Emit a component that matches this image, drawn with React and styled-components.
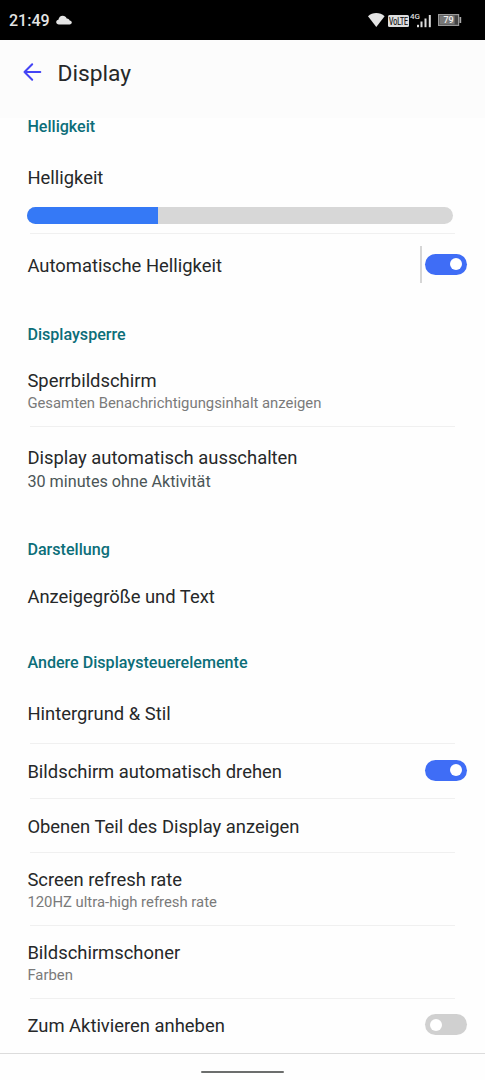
import React, { useState } from 'react';
import styled, { createGlobalStyle } from 'styled-components';

const GlobalStyle = createGlobalStyle`
  body {
    margin: 0;
    background: #fefefe;
    font-family: Roboto, "Liberation Sans", sans-serif;
  }
`;

const Screen = styled.div`
  display: flex;
  flex-direction: column;
  width: 485px;
  height: 1080px;
  overflow: hidden;
`;

const StatusBar = styled.div`
  display: flex;
  align-items: center;
  justify-content: space-between;
  box-sizing: border-box;
  height: 40px;
  padding: 0 23px 0 9px;
  background: #000;
  color: #e4e4e4;
`;

const StatusGroup = styled.div`
  display: flex;
  align-items: center;
`;

const Clock = styled.span`
  margin-right: 6.5px;
  padding-top: 2px;
  font-size: 16px;
  font-weight: 500;
  line-height: 20px;
`;

const Header = styled.header`
  display: flex;
  align-items: center;
  box-sizing: border-box;
  height: 78px;
  padding: 0 22px 12px;
  background: #fcfcfc;
`;

const BackButton = styled.button`
  display: flex;
  margin: 0 14.5px 1px 0;
  padding: 0;
  border: none;
  background: none;
`;

const PageTitle = styled.h1`
  margin: 0;
  padding-top: 2px;
  color: #262829;
  font-size: 22.8px;
  font-weight: 400;
  line-height: 28px;
`;

const SectionTitle = styled.h2`
  margin: ${(props) => props.$top || 0}px 0 0 27.4px;
  padding-top: 1px;
  color: #0c6e79;
  font-size: 16.1px;
  font-weight: 500;
  line-height: 16px;
`;

const Row = styled.div`
  display: flex;
  align-items: center;
  justify-content: space-between;
  box-sizing: border-box;
  height: ${(props) => props.$height}px;
  padding: ${(props) => props.$top || 0}px 18.3px 0 27.4px;
`;

const Label = styled.div`
  color: #262829;
  font-size: 18.4px;
  line-height: 24px;
`;

const Summary = styled.div`
  margin-top: ${(props) => (props.$strong ? 2 : 0)}px;
  color: ${(props) => (props.$strong ? '#4b5557' : '#7a7a7a')};
  font-size: ${(props) => (props.$strong ? 16.2 : 14.85)}px;
  line-height: 20px;
`;

const Divider = styled.div`
  height: 1px;
  margin: 0 30px;
  background: #f0f0f0;
`;

const SliderTrack = styled.div`
  height: 17px;
  margin: 5px 32px 9px 27px;
  border-radius: 9px;
  background: #d7d7d7;
  overflow: hidden;
`;

const SliderFill = styled.div`
  height: 100%;
  background: #3579f6;
`;

const SwitchGroup = styled.div`
  display: flex;
  align-items: center;
`;

const SwitchLine = styled.div`
  width: 2px;
  height: 37px;
  margin: 0 3px 2px 0;
  background: #d6d6d6;
`;

const Track = styled.button`
  display: flex;
  align-items: center;
  justify-content: ${(props) => (props.$on ? 'flex-end' : 'flex-start')};
  box-sizing: border-box;
  width: 41.7px;
  height: 21px;
  margin: 0 0 3px;
  padding: 0 4.8px;
  border: none;
  border-radius: 11px;
  background: ${(props) => (props.$on ? '#3f6df6' : '#d0d0d0')};
`;

const Knob = styled.span`
  width: 12px;
  height: 12px;
  border-radius: 50%;
  background: #fff;
`;

const NavBar = styled.div`
  display: flex;
  justify-content: center;
  box-sizing: border-box;
  height: 27px;
  padding-top: 17px;
  border-top: 1px solid #dcdcdc;
`;

const HomeHandle = styled.div`
  width: 83px;
  height: 2px;
  border-radius: 1px;
  background: #6c6e6d;
`;

function Switch({ defaultOn }) {
  const [on, setOn] = useState(defaultOn);
  return (
    <Track $on={on} role="switch" aria-checked={on} onClick={() => setOn(!on)}>
      <Knob />
    </Track>
  );
}

function CloudIcon() {
  return (
    <svg width="16" height="10" viewBox="0 0 16 10" fill="#e4e4e4">
      <path d="M3 9.500C1.300 9.500 0.200 8.500 0.200 7.100C0.200 5.800 1.200 4.900 2.400 4.800C2.700 2.300 4.500 0.700 6.700 0.700C8.600 0.700 10 1.700 10.700 3.400C12.400 3.300 13.400 4.300 13.600 5.600C15 5.700 15.800 6.500 15.800 7.600C15.800 8.700 14.900 9.500 13.600 9.500Z" />
    </svg>
  );
}

function StatusIcons() {
  return (
    <svg width="95" height="20" viewBox="0 0 95 20" fontFamily="Roboto, sans-serif">
      <path d="M1 6.200C5.500 1.800 13 1.800 17.600 6.200L9.300 17Z" fill="#e4e4e4" />
      <rect x="21" y="5" width="21" height="12" rx="1.500" fill="#dedede" />
      <text x="22" y="15" fontSize="10.500" textLength="19" lengthAdjust="spacingAndGlyphs" fill="#111" stroke="#111" strokeWidth="0.200">
        VoLTE
      </text>
      <text x="43" y="9" fontSize="8" fontWeight="500" fill="#dedede">
        4G
      </text>
      <g fill="#dedede">
        <rect x="50" y="14.800" width="2" height="2.400" />
        <rect x="53.500" y="11.500" width="2" height="5.700" />
        <rect x="57.500" y="8.500" width="2" height="8.700" />
        <rect x="61.800" y="5" width="2" height="12.200" />
      </g>
      <rect x="71.600" y="4.600" width="20" height="10.800" fill="#444" stroke="#999" strokeWidth="1.200" />
      <rect x="72.600" y="5.600" width="15" height="8.800" fill="#777" />
      <rect x="92.500" y="7" width="1.700" height="6" fill="#aaa" />
      <text x="76.500" y="13.200" fontSize="9" fontWeight="500" fill="#f2f2f2">
        79
      </text>
    </svg>
  );
}

function ArrowIcon() {
  return (
    <svg width="21" height="20" viewBox="0 0 21 20" fill="none" stroke="#4444f5" strokeWidth="2" strokeLinecap="round" strokeLinejoin="round">
      <path d="M18.300 10H2.500M10.200 2.200L2.500 10L10.200 17.800" />
    </svg>
  );
}

function Setting({ label, summary, strong, height, top, children }) {
  return (
    <Row $height={height} $top={top}>
      <div>
        <Label>{label}</Label>
        {summary && <Summary $strong={strong}>{summary}</Summary>}
      </div>
      {children}
    </Row>
  );
}

function App() {
  const [brightness] = useState(30.8);

  return (
    <Screen>
      <GlobalStyle />
      <StatusBar>
        <StatusGroup>
          <Clock>21:49</Clock>
          <CloudIcon />
        </StatusGroup>
        <StatusIcons />
      </StatusBar>

      <Header>
        <BackButton aria-label="Zurück">
          <ArrowIcon />
        </BackButton>
        <PageTitle>Display</PageTitle>
      </Header>

      <SectionTitle>Helligkeit</SectionTitle>
      <Setting label="Helligkeit" height={67} top={19} />
      <SliderTrack>
        <SliderFill style={{ width: `${brightness}%` }} />
      </SliderTrack>
      <Divider />
      <Setting label="Automatische Helligkeit" height={62} top={2}>
        <SwitchGroup>
          <SwitchLine />
          <Switch defaultOn />
        </SwitchGroup>
      </Setting>

      <SectionTitle $top={30}>Displaysperre</SectionTitle>
      <Setting label="Sperrbildschirm" summary="Gesamten Benachrichtigungsinhalt anzeigen" height={83} top={14} />
      <Divider />
      <Setting label="Display automatisch ausschalten" summary="30 minutes ohne Aktivität" strong height={84} />

      <SectionTitle $top={30}>Darstellung</SectionTitle>
      <Setting label="Anzeigegröße und Text" height={78} />

      <SectionTitle $top={19}>Andere Displaysteuerelemente</SectionTitle>
      <Setting label="Hintergrund &amp; Stil" height={72} top={13} />
      <Divider />
      <Setting label="Bildschirm automatisch drehen" height={54} top={1}>
        <Switch defaultOn />
      </Setting>
      <Divider />
      <Setting label="Obenen Teil des Display anzeigen" height={53} top={2} />
      <Divider />
      <Setting label="Screen refresh rate" summary="120HZ ultra-high refresh rate" height={72} top={2} />
      <Divider />
      <Setting label="Bildschirmschoner" summary="Farben" height={72} top={2} />
      <Divider />
      <Setting label="Zum Aktivieren anheben" height={54}>
        <Switch defaultOn={false} />
      </Setting>

      <NavBar>
        <HomeHandle />
      </NavBar>
    </Screen>
  );
}

export default App;
